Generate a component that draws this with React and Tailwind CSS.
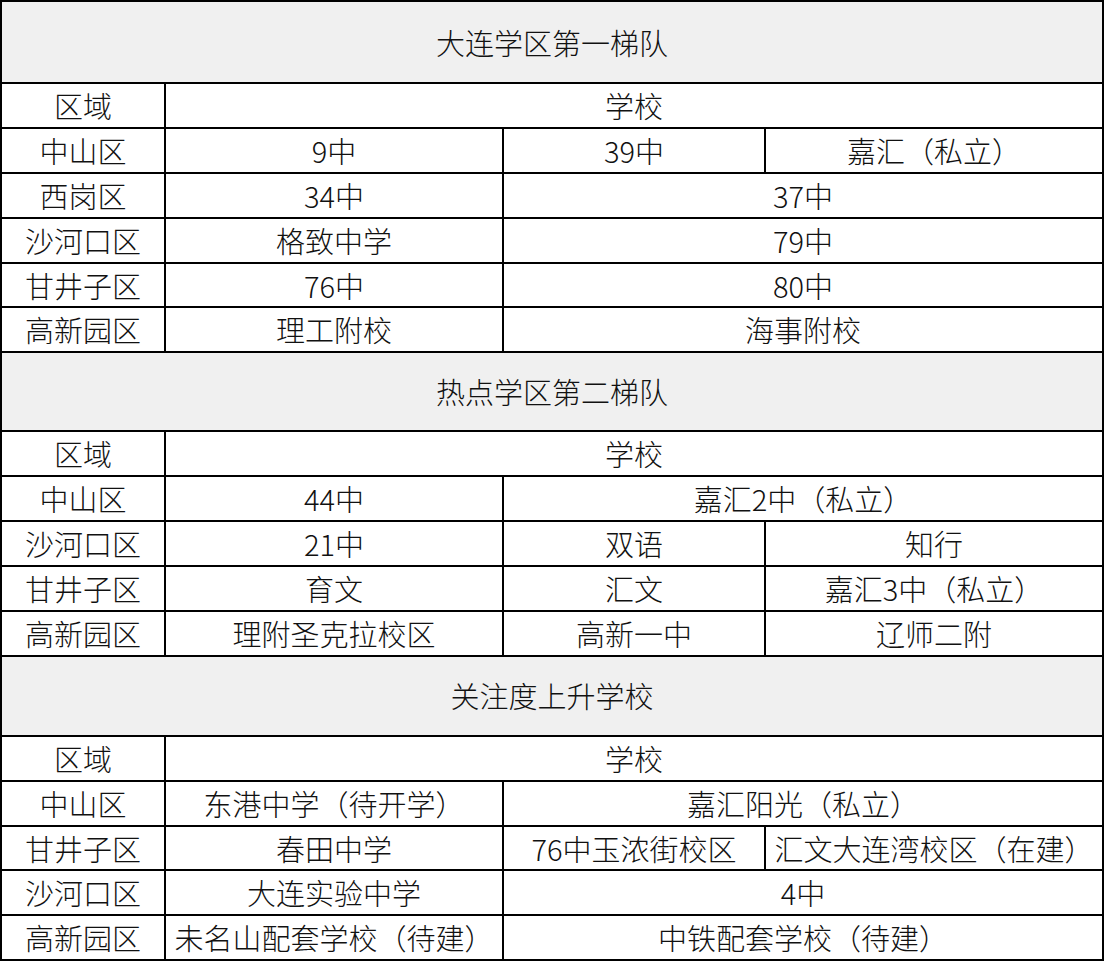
import React from 'react';

// 表格数据：每个分区一个标题 + 若干行
const sections = [
  {
    title: '大连学区第一梯队',
    h: 'h-[80px]',
    rows: [
      ['中山区', '9中', '39中', '嘉汇（私立）'],
      ['西岗区', '34中', '37中'],
      ['沙河口区', '格致中学', '79中'],
      ['甘井子区', '76中', '80中'],
      ['高新园区', '理工附校', '海事附校'],
    ],
  },
  {
    title: '热点学区第二梯队',
    h: 'h-[77px]',
    rows: [
      ['中山区', '44中', '嘉汇2中（私立）'],
      ['沙河口区', '21中', '双语', '知行'],
      ['甘井子区', '育文', '汇文', '嘉汇3中（私立）'],
      ['高新园区', '理附圣克拉校区', '高新一中', '辽师二附'],
    ],
  },
  {
    title: '关注度上升学校',
    h: 'h-[78px]',
    rows: [
      ['中山区', '东港中学（待开学）', '嘉汇阳光（私立）'],
      ['甘井子区', '春田中学', '76中玉浓街校区', '汇文大连湾校区（在建）'],
      ['沙河口区', '大连实验中学', '4中'],
      ['高新园区', '未名山配套学校（待建）', '中铁配套学校（待建）'],
    ],
  },
];

const cell = 'bg-white h-[42.9px] flex items-center justify-center whitespace-nowrap';

const App = () => {
  return (
    <div
      className="min-h-screen bg-white text-[#111] text-[29px] font-light leading-none"
      style={{ fontFamily: '"Noto Sans CJK SC", "Noto Sans", sans-serif' }}
    >
      <div className="grid grid-cols-[162px_336px_260px_336px] gap-[2px] bg-black p-[2px] w-fit">
        {sections.map((s) => (
          <React.Fragment key={s.title}>
            {/* 分区标题 */}
            <div className={`col-span-4 bg-[#f0f0f0] ${s.h} flex items-center justify-center`}>
              {s.title}
            </div>
            <div className={cell}>区域</div>
            <div className={`${cell} col-span-3`}>学校</div>
            {s.rows.map((r) => (
              <React.Fragment key={s.title + r[0]}>
                <div className={cell}>{r[0]}</div>
                <div className={cell}>{r[1]}</div>
                {r.length === 4 ? (
                  <>
                    <div className={cell}>{r[2]}</div>
                    <div className={cell}>{r[3]}</div>
                  </>
                ) : (
                  <div className={`${cell} col-span-2`}>{r[2]}</div>
                )}
              </React.Fragment>
            ))}
          </React.Fragment>
        ))}
      </div>
    </div>
  );
};

export default App;
